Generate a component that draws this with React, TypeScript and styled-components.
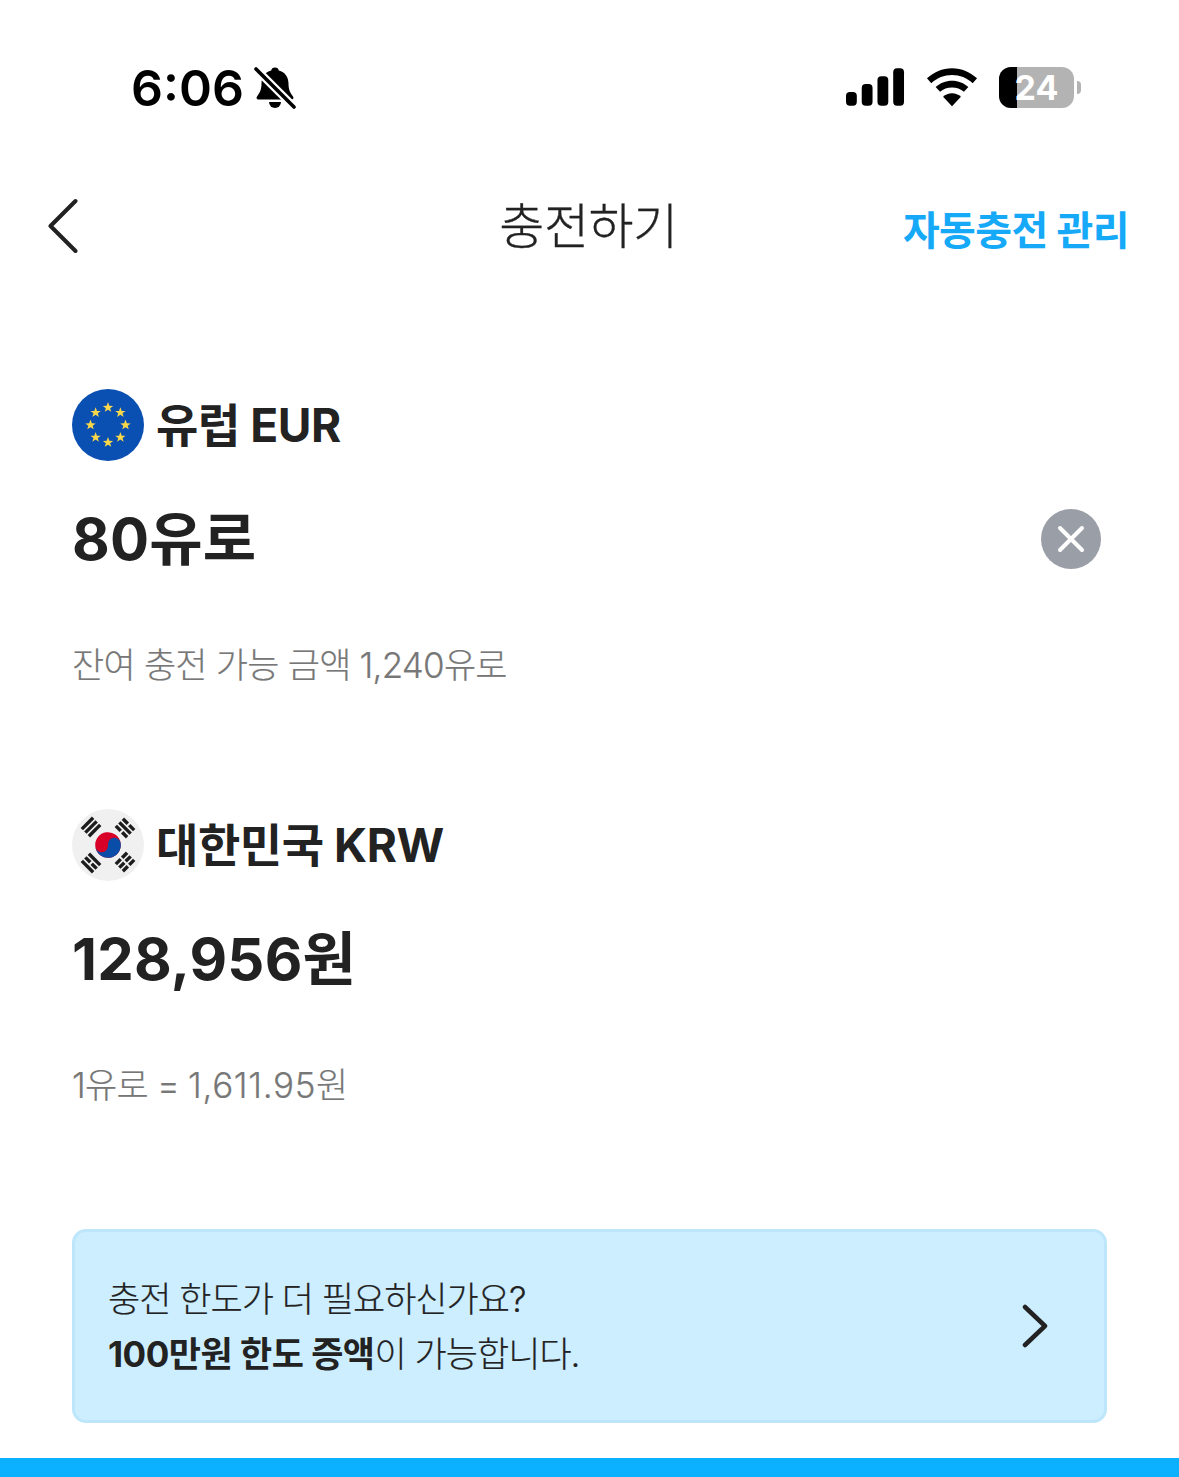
import React from "react";
import styled, { createGlobalStyle } from "styled-components";

const Global = createGlobalStyle`
  html, body { margin: 0; padding: 0; background: #fff; }
  body { font-family: Inter, "Noto Sans CJK KR", sans-serif; color: #222; }
`;
const Page = styled.div`
  width: 1179px; height: 1477px; overflow: hidden; display: flex; flex-direction: column; background: #fff;
`;
const StatusBar = styled.div`
  height: 176px; box-sizing: border-box; padding: 60px 98px 0 131px; display: flex; justify-content: space-between; align-items: flex-start;
`;
const TimeGroup = styled.div`
  display: flex; align-items: center; gap: 10px; height: 56px;
`;
const Time = styled.span`
  font-size: 50px; font-weight: 600; color: #000; letter-spacing: 0; line-height: 56px;
  font-family: Inter, sans-serif;
`;
const StatusIcons = styled.div`
  display: flex; align-items: center; height: 56px; margin-top: -1px;
`;
const Signal = styled.svg` width: 59px; height: 38px; margin-right: 21px; `;
const Wifi = styled.svg` width: 52px; height: 39px; margin-right: 21px; `;
const Battery = styled.div`
  position: relative; width: 75px; height: 41px; border-radius: 12px; overflow: hidden; background: #b3b3b3;
  font: 700 34px/41px Inter, sans-serif; color: #fff; text-align: center; margin-right: 3px;
`;
const BatteryFill = styled.div`
  position: absolute; left: 0; top: 0; bottom: 0; width: 18px; background: #000;
`;
const BatteryText = styled.span`
  position: relative;
`;
const BatteryCap = styled.div`
  width: 4px; height: 13px; background: #b3b3b3; border-radius: 0 6px 6px 0;
`;
const Nav = styled.div`
  height: 104px; padding: 0 50px 0 48px; display: grid; grid-template-columns: 1fr auto 1fr; align-items: center;
`;
const NavTitle = styled.div`
  font-size: 49px; font-weight: 300; color: #222; line-height: 104px; letter-spacing: -0.5px; margin-top: -2px; -webkit-text-stroke: 0.3px #222;
`;
const NavAction = styled.div`
  justify-self: end; font-size: 40px; font-weight: 700; color: #15a9f8; letter-spacing: -0.6px;
`;
const Back = styled.svg` width: 30px; height: 56px; margin-top: -4px; `;
const Content = styled.div`
  padding: 0 72px; display: flex; flex-direction: column; flex: 1;
`;
const Section = styled.section<{ $top: number }>`
  display: flex; flex-direction: column; margin-top: ${(p) => p.$top}px;
`;
const CurrencyRow = styled.div`
  display: flex; align-items: center; gap: 12px; height: 72px;
`;
const CurrencyName = styled.div`
  font-size: 46px; font-weight: 700; color: #222; letter-spacing: -0.42px; line-height: 72px;
`;
const AmountRow = styled.div`
  display: flex; align-items: center; justify-content: space-between; height: 60px; margin-top: 48px; padding-right: 6px;
`;
const Amount = styled.div`
  font-size: 58px; font-weight: 700; color: #222; letter-spacing: 0.2px; line-height: 60px;
`;
const ClearBtn = styled.button`
  width: 60px; height: 60px; border-radius: 50%; background: #9a9ea7; border: 0; padding: 0; display: flex; align-items: center; justify-content: center;
`;
const Hint = styled.div`
  font-size: 35px; font-weight: 300; color: #777; line-height: 44px; margin-top: 74px; letter-spacing: -0.78px; -webkit-text-stroke: 0.2px #777;
`;
const HintNumber = styled.span`
  letter-spacing: 0.65px;
`;
const Banner = styled.div`
  height: 194px; margin-top: 122px; box-sizing: border-box; border: 3px solid #bde6fb; border-radius: 14px; background: #cdeeff;
  display: flex; align-items: center; justify-content: space-between; padding: 0 56px 0 33px;
`;
const BannerText = styled.div`
  font-size: 35px; font-weight: 300; line-height: 55px; color: #222; letter-spacing: -1px; margin-top: 2px; -webkit-text-stroke: 0.2px #222;
`;
const Strong = styled.b`
  font-weight: 700; letter-spacing: -0.5px; -webkit-text-stroke: 0;
`;
const Chevron = styled.svg` width: 26px; height: 44px; `;
const Footer = styled.div`
  height: 19px; background: #0bb0ff; margin-top: auto;
`;

const stars = [0, 45, 90, 135, 180, 225, 270, 315];
const starPts = "0,-5.400 1.350,-1.700 5.200,-1.600 2.150,0.650 3.250,4.300 0,2.150 -3.250,4.300 -2.150,0.650 -5.200,-1.600 -1.350,-1.700";

const EuFlag = () => (
  <svg width="72" height="72" viewBox="0 0 72 72">
    <circle cx="36" cy="36" r="36" fill="#0a4fb2" />
    {stars.map((a) => {
      const r = (a * Math.PI) / 180;
      return <polygon key={a} points={starPts} fill="#f8d84a" transform={`translate(${36 + 17.5 * Math.sin(r)} ${36 - 17.5 * Math.cos(r)})`} />;
    })}
  </svg>
);

const Trigram = ({ x, y, rot, breaks }: { x: number; y: number; rot: number; breaks: boolean[] }) => (
  <g transform={`translate(${x} ${y}) rotate(${rot})`}>
    {breaks.map((b, i) => {
      const yy = -5 + i * 5;
      return b ? (
        <g key={i}>
          <rect x={-8} y={yy - 1.7} width={7} height={3.4} fill="#1c1c1c" />
          <rect x={1} y={yy - 1.7} width={7} height={3.4} fill="#1c1c1c" />
        </g>
      ) : (
        <rect key={i} x={-8} y={yy - 1.7} width={16} height={3.4} fill="#1c1c1c" />
      );
    })}
  </g>
);

const KrFlag = () => (
  <svg width="72" height="72" viewBox="0 0 72 72">
    <circle cx="36" cy="36" r="36" fill="#f0f0f0" />
    <g transform="rotate(-8 36 36)">
      <circle cx="36" cy="36" r="12.8" fill="#d80027" />
      <path d="M23.2 36a6.400 6.400 0 0 0 12.800 0a6.400 6.400 0 0 1 12.800 0a12.800 12.800 0 0 1-25.600 0z" fill="#0a4da8" />
    </g>
    <Trigram x={19} y={18} rot={-45} breaks={[false, false, false]} />
    <Trigram x={53} y={19} rot={45} breaks={[true, false, true]} />
    <Trigram x={19} y={54} rot={45} breaks={[false, true, false]} />
    <Trigram x={53} y={53} rot={-45} breaks={[true, true, true]} />
  </svg>
);

export default function App() {
  return (
    <Page>
      <Global />
      <StatusBar>
        <TimeGroup>
          <Time>6:06</Time>
          <svg width="42" height="44" viewBox="0 0 42 44">
            <path d="M21 1.500c2.200 0 3.500 1.300 3.800 3C31 6 34.500 11 34.500 17.500c0 5 1 8.500 4.500 13c1 1.300.3 3-1.300 3H4.300c-1.600 0-2.300-1.700-1.300-3C6.500 26 7.500 22.500 7.500 17.500 7.500 11 11 6 17.200 4.500c.3-1.700 1.600-3 3.800-3z" fill="#000" />
            <path d="M15 36h12a6 6 0 0 1-12 0z" fill="#000" />
            <path d="M1 2l39 39" stroke="#fff" strokeWidth="8" />
            <path d="M2 3l38 38" stroke="#000" strokeWidth="3.600" strokeLinecap="round" />
          </svg>
        </TimeGroup>
        <StatusIcons>
          <Signal viewBox="0 0 60 38">
            <rect x="0" y="24" width="11" height="14" rx="4" fill="#000" />
            <rect x="16" y="16" width="11" height="22" rx="4" fill="#000" />
            <rect x="32" y="8" width="11" height="30" rx="4" fill="#000" />
            <rect x="48" y="0" width="11" height="38" rx="4" fill="#000" />
          </Signal>
          <Wifi viewBox="0 0 54 40">
            <path d="M27 0C17 0 8 4 1 10.500l4.500 5C11.500 10 19 7 27 7s15.500 3 21.500 8.500l4.500-5C46 4 37 0 27 0z" fill="#000" />
            <path d="M27 13c-6.500 0-12.500 2.500-17 6.500l4.600 5C18 21.500 22.300 20 27 20s9 1.500 12.400 4.500l4.600-5C39.500 15.500 33.500 13 27 13z" fill="#000" />
            <path d="M27 26c-3.600 0-6.800 1.300-9.300 3.500L27 39.500l9.300-10C33.800 27.300 30.600 26 27 26z" fill="#000" />
          </Wifi>
          <Battery>
            <BatteryFill />
            <BatteryText>24</BatteryText>
          </Battery>
          <BatteryCap />
        </StatusIcons>
      </StatusBar>
      <Nav>
        <Back viewBox="0 0 30 56" fill="none" stroke="#222" strokeWidth="4" strokeLinecap="round" strokeLinejoin="round">
          <path d="M27.500 3L2.500 28l25 25" />
        </Back>
        <NavTitle>충전하기</NavTitle>
        <NavAction>자동충전 관리</NavAction>
      </Nav>
      <Content>
        <Section $top={109}>
          <CurrencyRow>
            <EuFlag />
            <CurrencyName>유럽 EUR</CurrencyName>
          </CurrencyRow>
          <AmountRow>
            <Amount>80유로</Amount>
            <ClearBtn aria-label="지우기">
              <svg width="28" height="28" viewBox="0 0 28 28" fill="none" stroke="#fff" strokeWidth="4" strokeLinecap="round">
                <path d="M3 3l22 22M25 3L3 25" />
              </svg>
            </ClearBtn>
          </AmountRow>
          <Hint>잔여 충전 가능 금액 1,240유로</Hint>
        </Section>
        <Section $top={122}>
          <CurrencyRow>
            <KrFlag />
            <CurrencyName>대한민국 KRW</CurrencyName>
          </CurrencyRow>
          <AmountRow>
            <Amount>128,956원</Amount>
          </AmountRow>
          <Hint>1유로 = <HintNumber>1,611.95</HintNumber>원</Hint>
        </Section>
        <Banner>
          <BannerText>
            충전 한도가 더 필요하신가요?
            <br />
            <Strong>100만원 한도 증액</Strong>이 가능합니다.
          </BannerText>
          <Chevron viewBox="0 0 26 44" fill="none" stroke="#222" strokeWidth="4.500" strokeLinecap="round" strokeLinejoin="round">
            <path d="M3 3l20 19L3 41" />
          </Chevron>
        </Banner>
      </Content>
      <Footer />
    </Page>
  );
}
